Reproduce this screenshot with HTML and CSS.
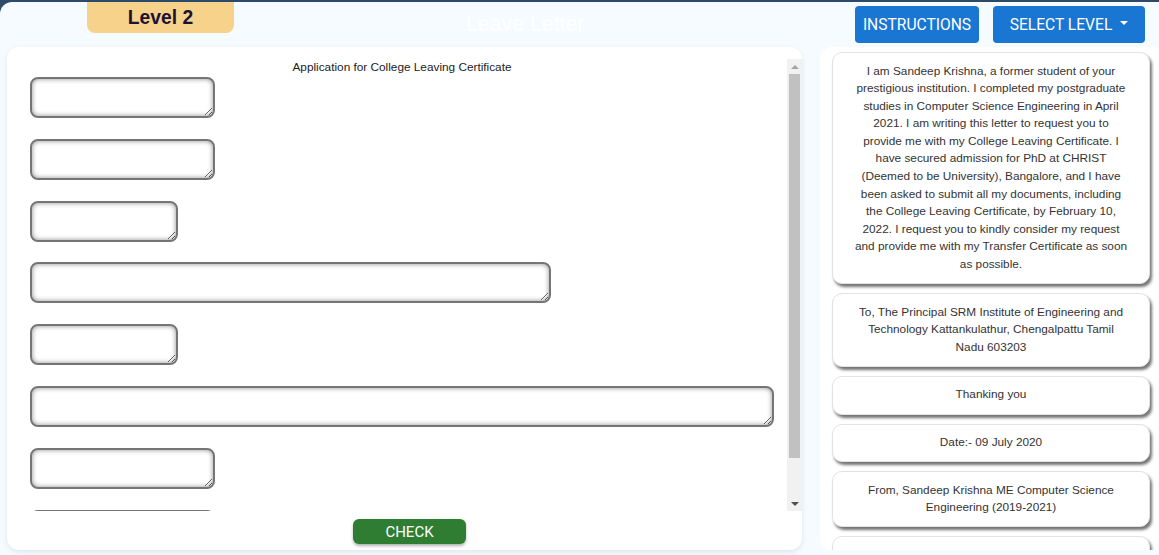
FILE: index.html
```html
<!DOCTYPE html>
<html lang="en">
<head>
<meta charset="utf-8">
<title>Leave Letter</title>
<link rel="stylesheet" href="styles.css">
</head>
<body>
<div class="app">
  <header class="header">
    <div class="level-badge">Level 2</div>
    <h1 class="page-title">Leave Letter</h1>
    <div class="actions">
      <button class="btn btn-instr">Instructions</button>
      <button class="btn btn-select">Select Level <span class="caret"></span></button>
    </div>
  </header>
  <main class="main">
    <section class="letter-card">
      <div class="letter-body">
        <div class="letter-scroll">
          <p class="letter-title">Application for College Leaving Certificate</p>
          <textarea class="slot slot-s"></textarea>
          <textarea class="slot slot-s"></textarea>
          <textarea class="slot slot-xs"></textarea>
          <textarea class="slot slot-m"></textarea>
          <textarea class="slot slot-xs"></textarea>
          <textarea class="slot slot-l"></textarea>
          <textarea class="slot slot-s"></textarea>
          <textarea class="slot slot-s"></textarea>
        </div>
        <div class="scrollbar" aria-hidden="true">
          <div class="sb-btn"><span class="arrow-up"></span></div>
          <div class="sb-track"><div class="sb-thumb"></div></div>
          <div class="sb-btn"><span class="arrow-down"></span></div>
        </div>
      </div>
      <div class="check-row">
        <button class="btn-check">Check</button>
      </div>
    </section>
    <aside class="pieces">
      <div class="piece">I am Sandeep Krishna, a former student of your prestigious institution. I completed my postgraduate studies in Computer Science Engineering in April 2021. I am writing this letter to request you to provide me with my College Leaving Certificate. I have secured admission for PhD at CHRIST (Deemed to be University), Bangalore, and I have been asked to submit all my documents, including the College Leaving Certificate, by February 10, 2022. I request you to kindly consider my request and provide me with my Transfer Certificate as soon as possible.</div>
      <div class="piece">To, The Principal SRM Institute of Engineering and Technology Kattankulathur, Chengalpattu Tamil Nadu 603203</div>
      <div class="piece">Thanking you</div>
      <div class="piece">Date:- 09 July 2020</div>
      <div class="piece">From, Sandeep Krishna ME Computer Science Engineering (2019-2021)</div>
      <div class="piece piece-empty"></div>
    </aside>
  </main>
</div>
</body>
</html>
```

FILE: styles.css
```css
* { box-sizing: border-box; }

html, body {
  margin: 0;
  padding: 0;
  height: 100%;
  overflow: hidden;
}

body {
  background: #2e4a69;
  font-family: "Liberation Sans", Arial, sans-serif;
}

.app {
  margin-top: 2px;
  height: 553px;
  background: #f5fbfe;
  border-top-left-radius: 12px;
  overflow: hidden;
}

.header {
  height: 45px;
  display: flex;
  align-items: flex-start;
}

.level-badge {
  flex-shrink: 0;
  margin-top: -2px;
  margin-left: 87px;
  width: 147px;
  height: 33px;
  padding-top: 3px;
  background: #f6d28a;
  border-radius: 0 0 8px 8px;
  color: #1c1233;
  font-weight: bold;
  font-size: 19.3px;
  display: flex;
  align-items: center;
  justify-content: center;
}

.page-title {
  flex-shrink: 0;
  margin: 10px 0 0 232px;
  font-size: 21.3px;
  font-weight: normal;
  color: #ffffff;
  font-family: "Liberation Sans", Arial, sans-serif;
}

.actions {
  margin-left: auto;
  margin-right: 14px;
  margin-top: 4px;
  display: flex;
  gap: 14px;
}

.btn {
  height: 37px;
  padding: 0;
  border: none;
  border-radius: 4px;
  background: #1976d2;
  color: #ffffff;
  font-family: Roboto, "Liberation Sans", sans-serif;
  font-size: 15.6px;
  text-transform: uppercase;
  display: flex;
  align-items: center;
  justify-content: center;
}

.btn-instr { width: 124px; }

.btn-select {
  width: 152px;
  gap: 8px;
}

.caret {
  width: 0;
  height: 0;
  border-left: 4px solid transparent;
  border-right: 4px solid transparent;
  border-top: 4px solid #ffffff;
  margin-top: -3px;
}

.main {
  display: flex;
  align-items: flex-start;
}

.letter-card {
  flex-shrink: 0;
  margin-left: 7px;
  width: 795px;
  height: 503px;
  background: #ffffff;
  border-radius: 12px;
  box-shadow: 0 2px 5px rgba(60, 90, 120, 0.12);
  padding-top: 12px;
  display: flex;
  flex-direction: column;
}

.letter-body {
  height: 452px;
  display: flex;
}

.letter-scroll {
  flex: 1;
  overflow: hidden;
  padding: 2px 0 0 0;
}

.letter-title {
  margin: 0 0 3px 0;
  padding-left: 10px;
  text-align: center;
  font-size: 11.8px;
  line-height: 13px;
  color: #222;
}

.slot {
  display: block;
  height: 41px;
  margin: 0 0 20.8px 23px;
  border: 2px solid #757575;
  border-radius: 8px;
  background: #ffffff;
  box-shadow: inset 0 0 5px rgba(0, 0, 0, 0.45);
  resize: both;
}

.slot-xs { width: 148px; }
.slot-s { width: 185px; }
.slot-m { width: 521px; }
.slot-l { width: 744px; }

.scrollbar {
  width: 15px;
  background: #f1f1f1;
  display: flex;
  flex-direction: column;
}

.sb-btn {
  height: 15px;
  display: flex;
  align-items: center;
  justify-content: center;
}

.arrow-up {
  width: 0;
  height: 0;
  border-left: 4px solid transparent;
  border-right: 4px solid transparent;
  border-bottom: 4px solid #a3a3a3;
}

.arrow-down {
  width: 0;
  height: 0;
  border-left: 4px solid transparent;
  border-right: 4px solid transparent;
  border-top: 4px solid #505050;
}

.sb-track {
  flex: 1;
  padding: 0 2px;
}

.sb-thumb {
  height: 384px;
  background: #c1c1c1;
}

.check-row {
  display: flex;
  justify-content: center;
  padding-top: 8px;
  padding-left: 10px;
}

.btn-check {
  width: 113px;
  height: 25px;
  border: none;
  border-radius: 6px;
  background: #2e7d32;
  color: #ffffff;
  font-family: Roboto, "Liberation Sans", sans-serif;
  font-size: 15px;
  text-transform: uppercase;
  box-shadow: 0 2px 3px rgba(0, 0, 0, 0.3);
}

.pieces {
  flex-shrink: 0;
  margin-left: 18px;
  width: 345px;
  height: 503px;
  background: #ffffff;
  border-radius: 12px;
  padding: 5px 15px 0 12px;
  display: flex;
  flex-direction: column;
  gap: 9px;
  overflow: hidden;
}

.piece {
  flex-shrink: 0;
  width: 318px;
  padding: 9.5px 21.5px;
  border: 1px solid #e2e2e2;
  border-radius: 10px;
  background: #ffffff;
  box-shadow: 2px 3px 3px rgba(0, 0, 0, 0.55);
  text-align: center;
  font-size: 11.8px;
  line-height: 17.6px;
  color: #333333;
}

.piece-empty {
  height: 40px;
}
```
